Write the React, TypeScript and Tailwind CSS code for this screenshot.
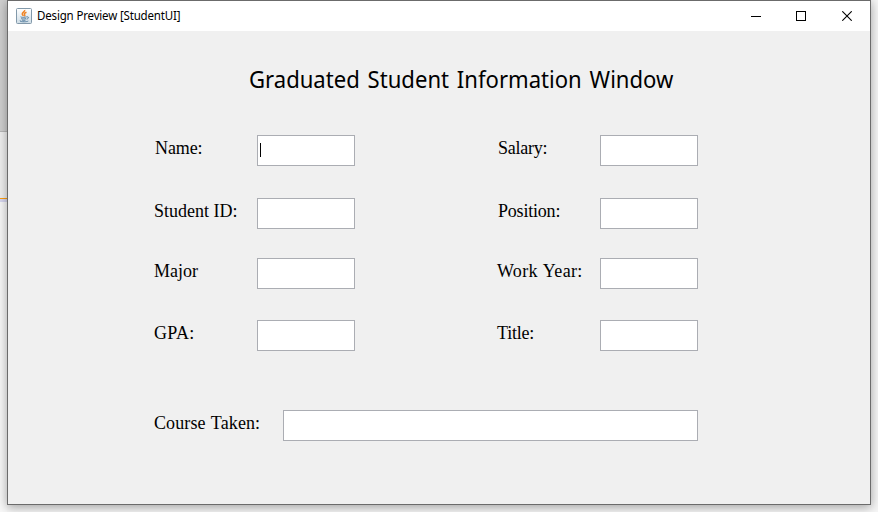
import React from "react";

type FieldProps = {
  label: string;
  labelClass: string;
  tracking?: string;
  caret?: boolean;
  inputClass?: string;
};

function Field({ label, labelClass, tracking = "", caret = false, inputClass = "w-[98px]" }: FieldProps) {
  return (
    <label className="flex h-[31px] items-start">
      <span className={`shrink-0 whitespace-nowrap text-[18px] leading-[26px] ${labelClass}`}>
        <span className={tracking}>{label}</span>
      </span>
      <span className="relative flex">
        <input className={`h-[31px] border border-[#abadb3] bg-white px-1 outline-none ${inputClass}`} />
        {caret && <span className="absolute left-[3px] top-2 h-3.5 w-px bg-black" />}
      </span>
    </label>
  );
}

function JavaIcon() {
  return (
    <svg width="16" height="16" viewBox="0 0 16 16" fill="none">
      <defs>
        <linearGradient id="tile" x1="0" y1="0" x2="0" y2="1">
          <stop offset="0" stopColor="#ffffff" />
          <stop offset="1" stopColor="#cfdde6" />
        </linearGradient>
      </defs>
      <rect x="0.5" y="0.5" width="15" height="15" rx="1" fill="url(#tile)" stroke="#8299aa" />
      <path d="M8.7 2C9.2 4 5.6 4.4 6.3 6.2C6.5 6.8 7.1 7.2 7.2 8M10.5 4.3C8.2 5.2 8 5.8 8.7 6.8C9 7.3 8.8 7.8 8.3 8.2" stroke="#ef8426" strokeWidth="1.5" />
      <path d="M4.6 8.8C4.5 9.5 9.5 9.4 10.8 8.8M11 8.9C13.4 8.5 12.8 10.8 10.5 11.1M5.3 10.5C6.4 11.1 8.8 11 10 10.6M5.7 12C7 12.5 8.5 12.4 9.6 12.1M4.4 12.4C1.8 13.8 10.5 14.3 12.3 13" stroke="#527b9d" strokeWidth="0.95" />
    </svg>
  );
}

export default function App() {
  return (
    <div className="flex h-[512px] w-[878px] overflow-hidden bg-[#f6f6f6] font-['Liberation_Serif','Times_New_Roman',serif] text-black">
      <div className="flex w-[7px] shrink-0 flex-col">
        <div className="h-[132px] border-b border-[#b8b8b8] bg-[#d0d0d0]" />
        <div className="h-[66px] bg-[#f0f0f0]" />
        <div className="h-px bg-[#ff9f0f]" />
        <div className="h-[3px] bg-[#d8d8f0]" />
        <div className="flex-1 bg-[#f8f8f8]" />
      </div>
      <div className="relative flex h-[505px] w-[864px] shrink-0 flex-col border border-[#6b6b6b] bg-[#f0f0f0] shadow-[0_2px_10px_rgba(0,0,0,0.36)]">
        <header className="flex h-[30px] shrink-0 items-center justify-between bg-white pl-2">
          <div className="flex items-center">
            <JavaIcon />
            <span className="ml-[5px] origin-left scale-x-[0.96] whitespace-nowrap font-['Noto_Sans',sans-serif] text-[12px] leading-4 tracking-[-0.18px]">
              Design Preview [StudentUI]
            </span>
          </div>
          <div className="flex">
            <span className="flex h-[30px] w-[45px] items-center justify-center">
              <svg width="10" height="10" shapeRendering="crispEdges"><path d="M0 5.5H10" stroke="#000" /></svg>
            </span>
            <span className="flex h-[30px] w-[46px] items-center justify-center">
              <svg width="10" height="10" shapeRendering="crispEdges"><path d="M.5 .5H9.5V9.5H.5Z" fill="none" stroke="#000" /></svg>
            </span>
            <span className="flex h-[30px] w-[46px] items-center justify-center">
              <svg width="10" height="10"><path d="M.3 .3L9.7 9.7M9.7 .3L.3 9.7" stroke="#000" strokeWidth="1.1" /></svg>
            </span>
          </div>
        </header>
        <main className="flex flex-col pl-[146px] pt-[31px]">
          <h1 className="ml-[94.5px] w-[460px] origin-left scale-x-[0.92] whitespace-nowrap font-['Noto_Sans',sans-serif] text-[24px] leading-[34px] [word-spacing:2.3px]">
            Graduated Student Information Window
          </h1>
          <div className="mt-[39px] flex gap-[143px]">
            <div className="flex flex-col">
              <Field label="Name:" labelClass="w-[103px] pl-px" tracking="tracking-[-0.1px]" caret />
              <div className="h-8" />
              <Field label="Student ID:" labelClass="w-[103px]" />
              <div className="h-[29px]" />
              <Field label="Major" labelClass="w-[103px]" />
              <div className="h-[31px]" />
              <Field label="GPA:" labelClass="w-[103px]" tracking="tracking-[0.3px]" />
            </div>
            <div className="flex flex-col">
              <Field label="Salary:" labelClass="w-[102px]" tracking="tracking-[-0.25px]" />
              <div className="h-8" />
              <Field label="Position:" labelClass="w-[102px]" tracking="tracking-[-0.2px]" />
              <div className="h-[29px]" />
              <Field label="Work Year:" labelClass="-ml-px w-[103px]" tracking="tracking-[0.3px] [word-spacing:1px]" />
              <div className="h-[31px]" />
              <Field label="Title:" labelClass="-ml-px w-[103px]" tracking="tracking-[-0.2px]" />
            </div>
          </div>
          <div className="mt-[59px] flex">
            <Field label="Course Taken:" labelClass="w-[129px]" inputClass="w-[415px]" tracking="tracking-[0.1px] [word-spacing:1px]" />
          </div>
        </main>
      </div>
    </div>
  );
}
